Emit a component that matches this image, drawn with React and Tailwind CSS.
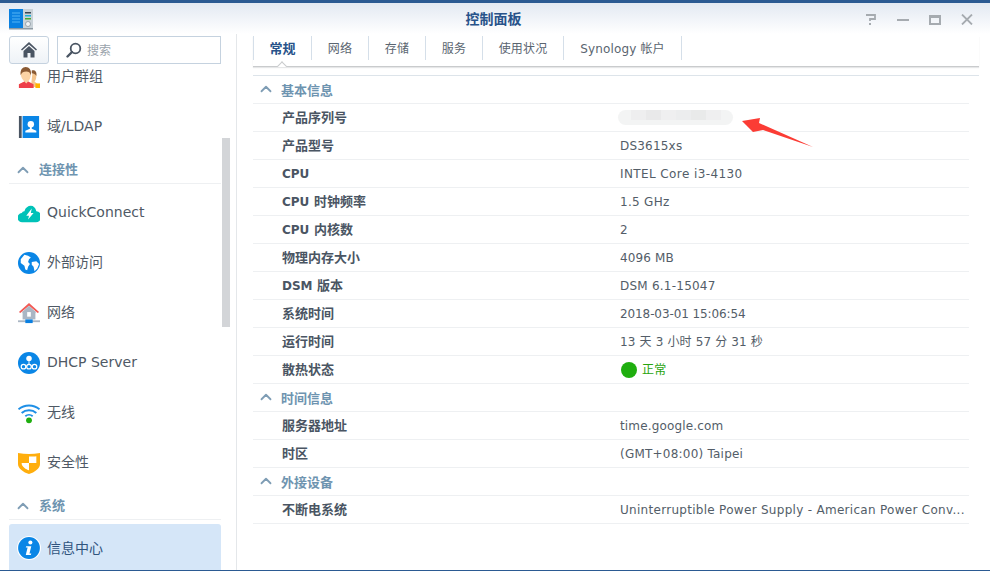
import { ChevronUp } from 'lucide-react';

const FONT = "font-['DejaVu_Sans','Noto_Sans_CJK_SC',sans-serif]";

const UsersIcon = () => (
  <svg width="22" height="22" viewBox="0 0 24 24">
    <path d="M16 6a4 5 0 0 1 4 5c0 3-1 5-2 6l5 4v2H14z" fill="#f4c58f" />
    <path d="M15 5c3-1 6 1 5 6-1-2-3-3-5-3z" fill="#8a5a34" />
    <rect x="19" y="19" width="5" height="5" fill="#ffb300" />
    <path d="M8 2c4 0 6 3 6 7 0 3-1 6-3 8l6 3v4H1v-4l6-3C5 15 3 12 3 9c0-4 2-7 5-7z" fill="#fbd3a5" />
    <path d="M3 10C2 4 5 1 8.500 1S15 4 14 10c-1-3-2-4-5-4s-5 1-6 4z" fill="#8a5a34" />
    <path d="M1 24v-4l6-3 2 2 2-2 6 3v4z" fill="#ee3f4a" />
  </svg>
);

const LdapIcon = () => (
  <svg width="22" height="22" viewBox="0 0 24 24">
    <rect x="1" y="0" width="3" height="24" fill="#4a5563" />
    <rect x="5" y="0" width="18" height="24" fill="#0a86e6" />
    <circle cx="14" cy="9" r="3.500" fill="#fff" />
    <path d="M13 12h2v2l5 2v2H8v-2l5-2z" fill="#fff" />
  </svg>
);

const QuickConnectIcon = () => (
  <svg width="22" height="22" viewBox="0 0 24 24">
    <path d="M5 22a5 5 0 0 1-1-10c1-1 1-2 3-2 1-4 4-6 7-6 3 0 5 2 6 6a6 6 0 0 1-1 12z" fill="#00c2b8" />
    <path d="M15 7l-6 8h3l-1 4 6-7h-3z" fill="#fff" />
  </svg>
);

const GlobeIcon = () => (
  <svg width="22" height="22" viewBox="0 0 24 24">
    <circle cx="12" cy="12" r="12" fill="#0a86e6" />
    <path d="M3 8l4-5 4 1 3 2-2 2-1 3 2 2-2 3-1 4-2-1-1-4-4-3zM15 11l5-1 3 3-2 5-3 3-1-5-2-2z" fill="#fff" />
  </svg>
);

const HomeNetIcon = () => (
  <svg width="22" height="22" viewBox="0 0 24 24">
    <path d="M5 10h14v9H5z" fill="#aab6c4" />
    <path d="M1 11L12 1l11 10-1.500 1L12 4 2.500 12z" fill="#f25a55" />
    <path d="M12 4l8 7.500H4z" fill="#aab6c4" />
    <rect x="10" y="11" width="4" height="5" fill="#fff" />
    <rect x="0" y="20" width="24" height="2" fill="#aab6c4" />
    <rect x="8" y="19" width="8" height="4" fill="#0a7fe0" />
  </svg>
);

const DhcpIcon = () => (
  <svg width="22" height="22" viewBox="0 0 24 24">
    <circle cx="12" cy="12" r="12" fill="#0a86e6" />
    <circle cx="12" cy="7" r="3" fill="#fff" />
    <path d="M12 10v5M12 15l-5 1M12 15l5 1" stroke="#fff" strokeWidth="1" />
    <circle cx="6" cy="16" r="2.500" fill="#0a86e6" stroke="#fff" strokeWidth="1.300" />
    <circle cx="12" cy="16" r="2.500" fill="#0a86e6" stroke="#fff" strokeWidth="1.300" />
    <circle cx="18" cy="16" r="2.500" fill="#0a86e6" stroke="#fff" strokeWidth="1.300" />
  </svg>
);

const WifiIcon = () => (
  <svg width="22" height="22" viewBox="0 0 24 24" fill="none">
    <path d="M0.500 8C7 2.500 17 2.500 23.500 8" stroke="#1e8fe6" strokeWidth="2.200" />
    <path d="M4 12c4.500-4 11.500-4 16 0" stroke="#1e8fe6" strokeWidth="2.200" />
    <path d="M8 15.500c2.300-2 5.700-2 8 0" stroke="#1e8fe6" strokeWidth="2" />
    <circle cx="12" cy="20" r="3.200" fill="#1fae0f" />
  </svg>
);

const ShieldIcon = () => (
  <svg width="22" height="22" viewBox="0 0 24 24">
    <path d="M0 1c8 1.500 16 1.500 24 0v12c0 5-6 9-12 11C6 22 0 18 0 13z" fill="#ffae0d" />
    <path d="M12 5c3 0 6 0 8-.500V12h-8zM12 12v8c-3-1-8-4-8-7.500V12z" fill="#fff" />
  </svg>
);

const InfoIcon = () => (
  <svg width="24" height="24" viewBox="0 0 26 26">
    <circle cx="13" cy="13" r="13" fill="#fff" />
    <circle cx="13" cy="13" r="11.800" fill="#0a86e6" />
    <circle cx="14.500" cy="7" r="2.200" fill="#fff" />
    <path d="M10 11h5.500l-2 8h2l-.500 1.500H9.500l2-8h-2z" fill="#fff" />
  </svg>
);

const PanelIcon = () => (
  <svg width="25" height="21" viewBox="0 0 25 21">
    <rect x="0" y="0" width="24" height="20" fill="#c9d2d8" />
    <rect x="0" y="0" width="14" height="19" fill="#0a80e0" />
    <path d="M3 4h8M3 7h8M3 10h8M3 13h8" stroke="#52b4f5" strokeWidth="1" />
    <rect x="16" y="3" width="6" height="1.500" fill="#3a4754" />
    <rect x="16" y="6" width="6" height="1.500" fill="#1ab0d8" />
    <rect x="16" y="9" width="6" height="1.500" fill="#4aa82e" />
    <circle cx="19" cy="15" r="2.500" fill="#f2f5f7" stroke="#7d8a94" strokeWidth=".7" />
    <rect x="0" y="19" width="24" height="1.500" fill="#8e9aa3" />
  </svg>
);

const HomeGlyph = () => (
  <svg width="16" height="16" viewBox="0 0 16 16">
    <path d="M8 0L0 7.500l1 1L8 2.500l7 6 1-1z" fill="#4a5563" />
    <path d="M8 4l-5.500 5v6.500H6.500V11h3v4.500h4V9z" fill="#4a5563" />
  </svg>
);

const SearchGlyph = () => (
  <svg width="16" height="16" viewBox="0 0 16 16" fill="none">
    <circle cx="9.500" cy="6.500" r="4.800" stroke="#4a5563" strokeWidth="1.800" />
    <path d="M6 10l-4.500 4.500" stroke="#4a5563" strokeWidth="2.400" strokeLinecap="round" />
  </svg>
);

const SideItem = ({ icon, label }) => (
  <div className="h-[50px] flex items-center pl-[9px]">
    <div className="w-[22px] h-[22px] shrink-0">{icon}</div>
    <span className="ml-[7px] mt-[-1px] text-[14px] text-[#4f5965]">{label}</span>
  </div>
);

const SideSection = ({ label }) => (
  <div className="h-[32px] mb-[4px] border-b border-[#eef0f2] flex items-center pt-[5px]">
    <ChevronUp size={18} strokeWidth={2.4} className="text-[#7f9db5] ml-[5px]" />
    <span className="ml-[7px] text-[13px] font-bold text-[#6e94b0]">{label}</span>
  </div>
);

const tabs = ['常规', '网络', '存储', '服务', '使用状况', 'Synology 帐户'];
const tabWidths = ['w-[59px]', 'w-[57px]', 'w-[57px]', 'w-[57px]', 'w-[81px]', 'w-[118px]'];

const Row = ({ label, tracking = 'tracking-[0.2px]', children }) => (
  <div className="h-[28px] border-b border-[#eef0f2] flex items-center">
    <span className="w-[367px] pl-[29px] shrink-0 text-[13px] font-bold text-[#4a5563]">{label}</span>
    <span className={`text-[12px] text-[#535d68] whitespace-nowrap ${tracking}`}>{children}</span>
  </div>
);

const Section = ({ label }) => (
  <div className="h-[28px] border-b border-[#eef0f2] flex items-center pt-[2px]">
    <ChevronUp size={18} strokeWidth={2.4} className="text-[#7f9db5] ml-[4px] mt-[-3px]" />
    <span className="ml-[6px] text-[13px] font-bold text-[#6e94b0]">{label}</span>
  </div>
);

const blurBlocks = ['bg-[#eeeeef]', 'bg-[#e9e9ea]', 'bg-[#efeff0]', 'bg-[#ecedee]', 'bg-[#e9eaea]', 'bg-[#efeff0]'];

export default function App() {
  return (
    <div className={`${FONT} relative w-[990px] h-[571px] overflow-hidden bg-white flex flex-col border-b border-[#2b5a92]`}>
      <div className="h-[3px] bg-[#2b5a92] shrink-0" />

      {/* title bar */}
      <div className="h-[31px] shrink-0 bg-gradient-to-b from-[#e3e9f2] to-[#ffffff] flex items-center relative">
        <div className="ml-[9px] mt-[2px]"><PanelIcon /></div>
        <div className="absolute left-[0px] w-[987px] top-[6px] text-center text-[14px] font-bold text-[#28538a]">控制面板</div>
        <div className="ml-auto flex items-center mr-[17px] mt-[2px] gap-[20px]">
          <svg width="12" height="11" viewBox="0 0 12 11" fill="none">
            <path d="M1 1h9v4H5v2" stroke="#a6abb0" strokeWidth="1.800" />
            <rect x="4" y="9" width="2" height="2" fill="#a6abb0" />
          </svg>
          <div className="w-[12px] h-[2px] bg-[#a6abb0]" />
          <div className="w-[12px] h-[10px] border-2 border-t-[3px] border-[#a6abb0]" />
          <svg width="12" height="11" viewBox="0 0 12 11"><path d="M1 .5l10 10M11 .5L1 10.500" stroke="#a6abb0" strokeWidth="1.800" /></svg>
        </div>
      </div>

      <div className="flex flex-1 min-h-0">
        {/* sidebar */}
        <div className="w-[237px] shrink-0 border-r border-[#e4e7ea] relative overflow-hidden pt-[2px]">
          <div className="relative z-10 h-[28px] flex pl-[9px]">
            <div className="w-[40px] h-[28px] rounded-[3px] border border-[#c5d2df] bg-gradient-to-b from-[#ffffff] to-[#eef2f7] flex items-center justify-center"><HomeGlyph /></div>
            <div className="ml-[8px] w-[164px] h-[28px] border border-[#c5d2df] bg-white flex items-center pl-[8px]">
              <SearchGlyph />
              <span className="ml-[5px] mt-[1px] text-[12px] text-[#9aa3ab]">搜索</span>
            </div>
          </div>
          <div className="mt-[-12px] ml-[9px] w-[212px]">
            <SideItem icon={<UsersIcon />} label="用户群组" />
            <SideItem icon={<LdapIcon />} label="域/LDAP" />
            <SideSection label="连接性" />
            <SideItem icon={<QuickConnectIcon />} label="QuickConnect" />
            <SideItem icon={<GlobeIcon />} label="外部访问" />
            <SideItem icon={<HomeNetIcon />} label="网络" />
            <SideItem icon={<DhcpIcon />} label="DHCP Server" />
            <SideItem icon={<WifiIcon />} label="无线" />
            <SideItem icon={<ShieldIcon />} label="安全性" />
            <SideSection label="系统" />
            <div className="h-[50px] rounded-[3px] bg-[#d5e6f8] flex items-center pl-[8px] pb-[2px]">
              <InfoIcon />
              <span className="ml-[6px] text-[14px] text-[#30547e]">信息中心</span>
            </div>
          </div>
          <div className="absolute left-[222px] top-[104px] w-[8px] h-[189px] bg-[#d3d5d8]" />
        </div>

        {/* main */}
        <div className="flex-1 min-w-0 pl-[16px] pr-[11px] pt-[2px]">
          <div className="relative h-[31px] flex border-b border-[#c9cbcd] shadow-[0_1px_1px_#e6e7e8]">
            {tabs.map((t, i) => (
              <div key={t} className={`${tabWidths[i]} h-[24px] pt-[1px] flex items-center justify-center border-r border-[#d5dfe9] ${i === 0 ? 'text-[13px] font-bold text-[#28538a] border-l' : 'text-[12px] tracking-[0.15px] text-[#5a6570]'}`}>{t}</div>
            ))}
            <div className="absolute left-[24px] bottom-[-1px] w-[10px] h-[6px] overflow-hidden">
              <div className="w-[8px] h-[8px] rotate-45 bg-white border-l border-t border-[#c9cbcd] translate-x-[1px] translate-y-[2px]" />
            </div>
          </div>
          <div className="mt-[8px] border-b border-[#dde4ea]" />
          <div className="mr-[10px]">
            <Section label="基本信息" />
            <Row label="产品序列号">
              <span className="flex items-start justify-center w-[115px] h-[15px] ml-[-2px] rounded-full bg-[#f3f4f4]">
                {blurBlocks.map((c, i) => <span key={i} className={`w-[15px] h-[10px] ${c}`} />)}
              </span>
            </Row>
            <Row label="产品型号">DS3615xs</Row>
            <Row label={<span className="text-[12px]">CPU</span>} tracking="tracking-[0.4px]">INTEL Core i3-4130</Row>
            <Row label={<><span className="text-[12px]">CPU</span> 时钟频率</>} tracking="tracking-[0.3px]">1.5 GHz</Row>
            <Row label={<><span className="text-[12px]">CPU</span> 内核数</>}>2</Row>
            <Row label="物理内存大小" tracking="tracking-[0.15px]">4096 MB</Row>
            <Row label={<><span className="text-[12px]">DSM</span> 版本</>} tracking="tracking-[0.23px]">DSM 6.1-15047</Row>
            <Row label="系统时间" tracking="tracking-[-0.1px]">2018-03-01 15:06:54</Row>
            <Row label="运行时间" tracking="tracking-[0.15px]">13 天 3 小时 57 分 31 秒</Row>
            <Row label="散热状态">
              <span className="flex items-center text-[#28a40e] ml-[1px]">
                <span className="w-[16px] h-[16px] rounded-full bg-[#1fae0f] mr-[5px]" />正常
              </span>
            </Row>
            <Section label="时间信息" />
            <Row label="服务器地址" tracking="tracking-[0.15px]">time.google.com</Row>
            <Row label="时区" tracking="tracking-[0.22px]">(GMT+08:00) Taipei</Row>
            <Section label="外接设备" />
            <Row label="不断电系统" tracking="tracking-[0.29px]">Uninterruptible Power Supply - American Power Conv...</Row>
          </div>
        </div>
      </div>

      {/* red annotation arrow */}
      <svg className="absolute left-[738px] top-[113px]" width="80" height="38" viewBox="0 0 80 38">
        <path d="M4 8L22 5l-1 5 54 24-50-17-10 2z" fill="#fb3c35" />
      </svg>
    </div>
  );
}
